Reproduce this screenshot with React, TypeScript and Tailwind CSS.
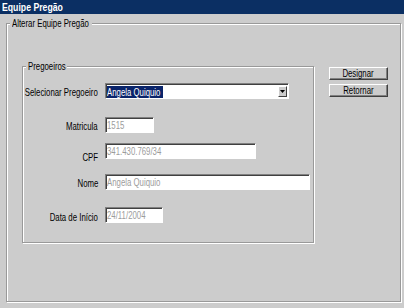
import type { ReactNode } from "react";

const Txt = ({ children, align = "left" }: { children: ReactNode; align?: "left" | "right" | "center" }) => (
  <span
    className={`inline-block shrink-0 whitespace-nowrap scale-x-[0.71] ${
      align === "right" ? "origin-right" : align === "center" ? "origin-center" : "origin-left"
    }`}
  >
    {children}
  </span>
);

const Field = ({
  label,
  labelTop,
  top,
  width,
  value,
}: {
  label: string;
  labelTop: string;
  top: string;
  width: string;
  value: string;
}) => (
  <div className={`flex items-start h-[16px] ${top}`}>
    <div className={`w-[75px] flex justify-end ${labelTop}`}>
      <Txt align="right">{label}</Txt>
    </div>
    <div
      className={`ml-[7px] h-[16px] bg-white border border-t-[#808080] border-l-[#808080] border-r-white border-b-white shadow-[inset_1px_1px_0_#404040] pl-[1px] pt-[1px] text-[#9c9c9c] overflow-hidden ${width}`}
    >
      <Txt>{value}</Txt>
    </div>
  </div>
);

const Button = ({ label }: { label: string }) => (
  <button className="w-[59px] h-[13px] flex items-center justify-center bg-[#cccccc] border border-t-white border-l-white border-r-[#404040] border-b-[#404040] shadow-[inset_-1px_-1px_0_#808080] leading-[11px] pb-[1px]">
    <Txt align="center">{label}</Txt>
  </button>
);

export default function App() {
  return (
    <div className="w-[404px] h-[308px] overflow-hidden bg-[#cccccc] text-black text-[11px] leading-[13px] font-['Liberation_Sans',Arial,sans-serif]">
      {/* title bar */}
      <div className="h-[14px] bg-[#0b2f63] text-white font-bold pl-[2px] pt-[1px]">
        <span className="inline-block whitespace-nowrap origin-left scale-x-[0.79]">Equipe Pregão</span>
      </div>

      {/* outer group */}
      <div className="relative ml-[6px] mt-[9px] w-[395px] h-[279px] border border-[#999999] shadow-[inset_1px_1px_0_#ffffff,1px_1px_0_#ffffff]">
        <div className="absolute -top-[7px] left-[3px] w-[82px] h-[13px] px-[2px] bg-[#cccccc] overflow-visible">
          <Txt>Alterar Equipe Pregão</Txt>
        </div>

        <div className="flex items-start ml-[15px] mt-[42px]">
          {/* inner group */}
          <div className="relative w-[292px] h-[177px] border border-[#999999] shadow-[inset_1px_1px_0_#ffffff,1px_1px_0_#ffffff]">
            <div className="absolute -top-[7px] left-[3px] w-[41px] h-[13px] px-[2px] bg-[#cccccc]">
              <Txt>Pregoeiros</Txt>
            </div>

            <div className="flex items-start h-[16px] mt-[16px]">
              <div className="w-[75px] flex justify-end mt-[3px]">
                <Txt align="right">Selecionar Pregoeiro</Txt>
              </div>
              <div className="ml-[7px] w-[184px] h-[16px] flex items-center bg-white border border-t-[#808080] border-l-[#808080] border-r-white border-b-white shadow-[inset_1px_1px_0_#404040] pl-[1px]">
                <div className="w-[56px] h-[12px] bg-[#0a246a] text-white leading-[12px] mt-[1px] overflow-visible">
                  <Txt>Angela Quiquio</Txt>
                </div>
                <div className="ml-auto mr-[1px] mt-[1px] w-[9px] h-[11px] flex items-center justify-center bg-[#cccccc] border border-t-white border-l-white border-r-[#404040] border-b-[#404040]">
                  <svg width="5" height="3" viewBox="0 0 5 3">
                    <polygon points="0,0 5,0 2.5,3" fill="#000" />
                  </svg>
                </div>
              </div>
            </div>

            <Field label="Matricula" labelTop="mt-[3px]" top="mt-[18px]" width="w-[49px]" value="1515" />
            <Field label="CPF" labelTop="mt-[8px]" top="mt-[10px]" width="w-[151px]" value="341.430.769/34" />
            <Field label="Nome" labelTop="mt-[3px]" top="mt-[15px]" width="w-[205px]" value="Angela Quiquio" />
            <Field label="Data de Início" labelTop="mt-[4px]" top="mt-[17px]" width="w-[58px]" value="24/11/2004" />
          </div>

          {/* buttons */}
          <div className="ml-[15px] mt-[1px] flex flex-col gap-[4px]">
            <Button label="Designar" />
            <Button label="Retornar" />
          </div>
        </div>
      </div>
    </div>
  );
}
